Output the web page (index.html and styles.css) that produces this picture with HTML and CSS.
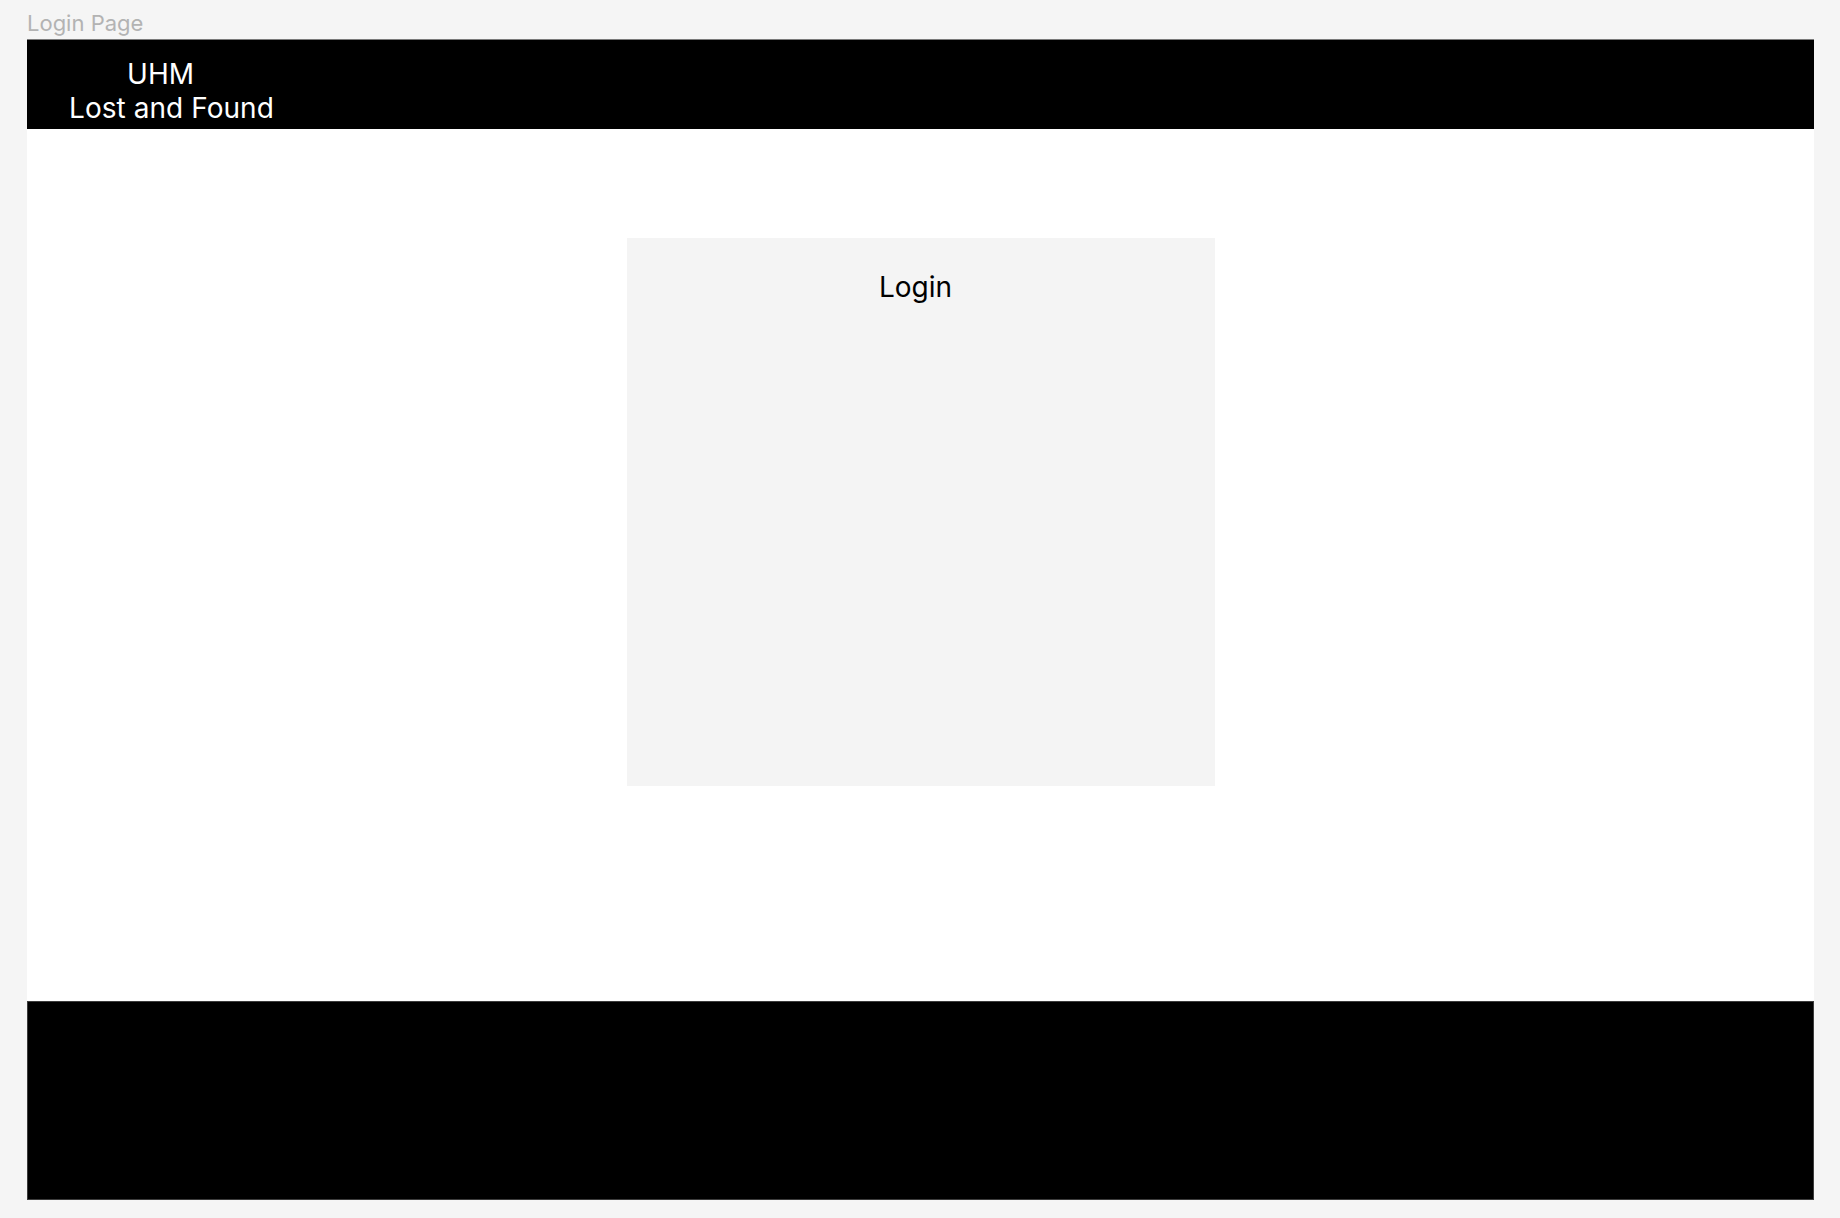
FILE: index.html
```html
<!DOCTYPE html>
<html lang="en">
<head>
<meta charset="utf-8">
<title>Login Page</title>
<link rel="stylesheet" href="styles.css">
</head>
<body>
  <div class="frame-label">Login Page</div>
  <div class="frame">
    <header class="topbar">
      <div class="brand">
        <span class="brand-line brand-uhm">UHM</span>
        <span class="brand-line brand-name">Lost and Found</span>
      </div>
    </header>
    <main class="content">
      <section class="login-card">
        <h1 class="login-title">Login</h1>
      </section>
    </main>
    <footer class="bottombar"></footer>
  </div>
</body>
</html>
```

FILE: styles.css
```css
html, body {
  margin: 0;
  padding: 0;
}

body {
  background: #f5f5f5;
  font-family: Inter, "Noto Sans", "Liberation Sans", sans-serif;
  padding: 0 26px 0 27px;
  height: 1218px;
  box-sizing: border-box;
}

.frame-label {
  padding-top: 10px;
  height: 26px;
  margin-bottom: 3px;
  font-size: 22px;
  line-height: 26px;
  color: #b3b3b3;
}

.frame {
  background: #ffffff;
  display: flex;
  flex-direction: column;
}

.topbar {
  background: #000000;
  height: 90px;
  box-sizing: border-box;
  border-top: 1px solid #7a7a7a;
  padding: 17px 0 0 42px;
}

.brand {
  display: flex;
  flex-direction: column;
  align-items: flex-start;
  color: #ffffff;
  font-size: 28px;
  line-height: 34px;
  letter-spacing: 0.05px;
}

.brand-uhm {
  margin-left: 58px;
}

.content {
  height: 872px;
  display: flex;
  justify-content: center;
  align-items: flex-start;
  padding-top: 109px;
  box-sizing: border-box;
}

.login-card {
  width: 588px;
  height: 548px;
  background: #f4f4f4;
  box-sizing: border-box;
  padding: 32px 10px 0 0;
  display: flex;
  flex-direction: column;
  align-items: center;
}

.login-title {
  margin: 0;
  font-size: 28px;
  line-height: 34px;
  font-weight: 400;
  color: #000000;
}

.bottombar {
  height: 199px;
  background: #000000;
  box-sizing: border-box;
  border: 1px solid #3c3c3c;
}
```
